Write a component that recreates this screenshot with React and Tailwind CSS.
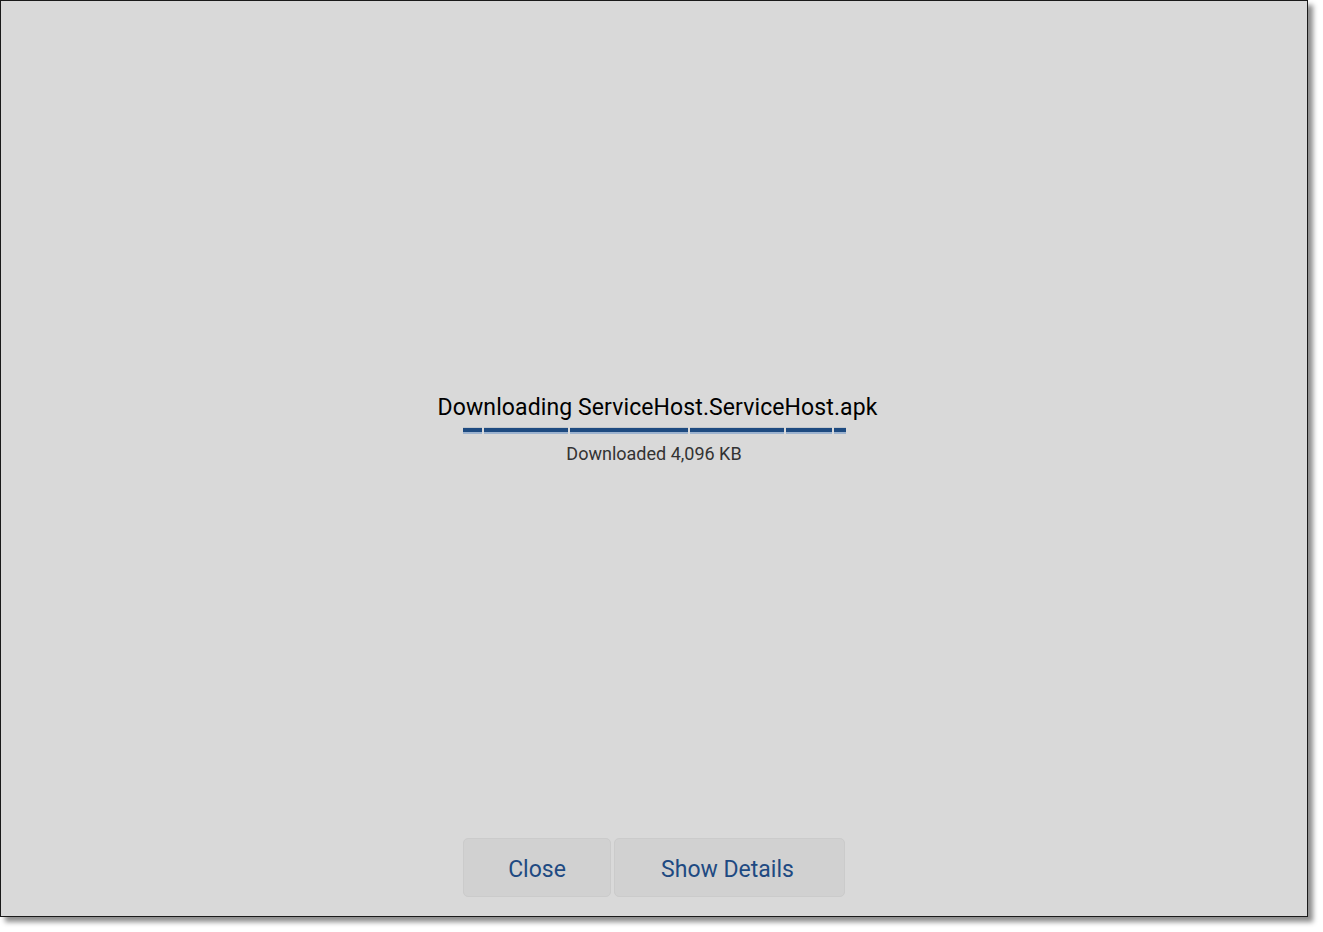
import React from "react";

const segments = [19, 84, 118, 94, 46, 12];

const ProgressBar = () => (
  <div className="flex gap-[2px] h-[7px]">
    {segments.map((w, i) => (
      <div key={i} className="flex flex-col" style={{ width: w }}>
        <div className="h-[1px] bg-[#c4c8cc]" />
        <div className="h-[4px] bg-[#1d4a80]" />
        <div className="h-[2px] bg-[#9db3cf]" />
      </div>
    ))}
  </div>
);

const App = () => {
  return (
    <div className="w-[1323px] h-[932px] bg-white" style={{ fontFamily: "Roboto, 'Noto Sans', sans-serif" }}>
      <div className="w-[1308px] h-[917px] bg-[#d9d9d9] border border-[#1a1a1a] shadow-[5px_5px_5px_rgba(0,0,0,0.45)] flex flex-col">
        <div className="flex-1 flex flex-col items-center pt-[392px]">
          <div className="text-[23px] leading-[30px] tracking-[0.1px] text-black pl-[7px]">Downloading ServiceHost.ServiceHost.apk</div>
          <div className="mt-[4px]">
            <ProgressBar />
          </div>
          <div className="mt-[8px] text-[18px] leading-[24px] text-[#333333]">Downloaded 4,096 KB</div>
        </div>
        <div className="flex justify-center gap-[3px] pb-[19px]">
          <button className="w-[148px] h-[59px] pt-[5px] rounded-[5px] bg-[#d1d1d1] border border-[#cbcbcb] text-[23px] text-[#1e4a82]">Close</button>
          <button className="w-[231px] h-[59px] pt-[5px] pr-[4px] rounded-[5px] bg-[#d1d1d1] border border-[#cbcbcb] text-[23px] text-[#1e4a82]">Show Details</button>
        </div>
      </div>
    </div>
  );
};

export default App;
